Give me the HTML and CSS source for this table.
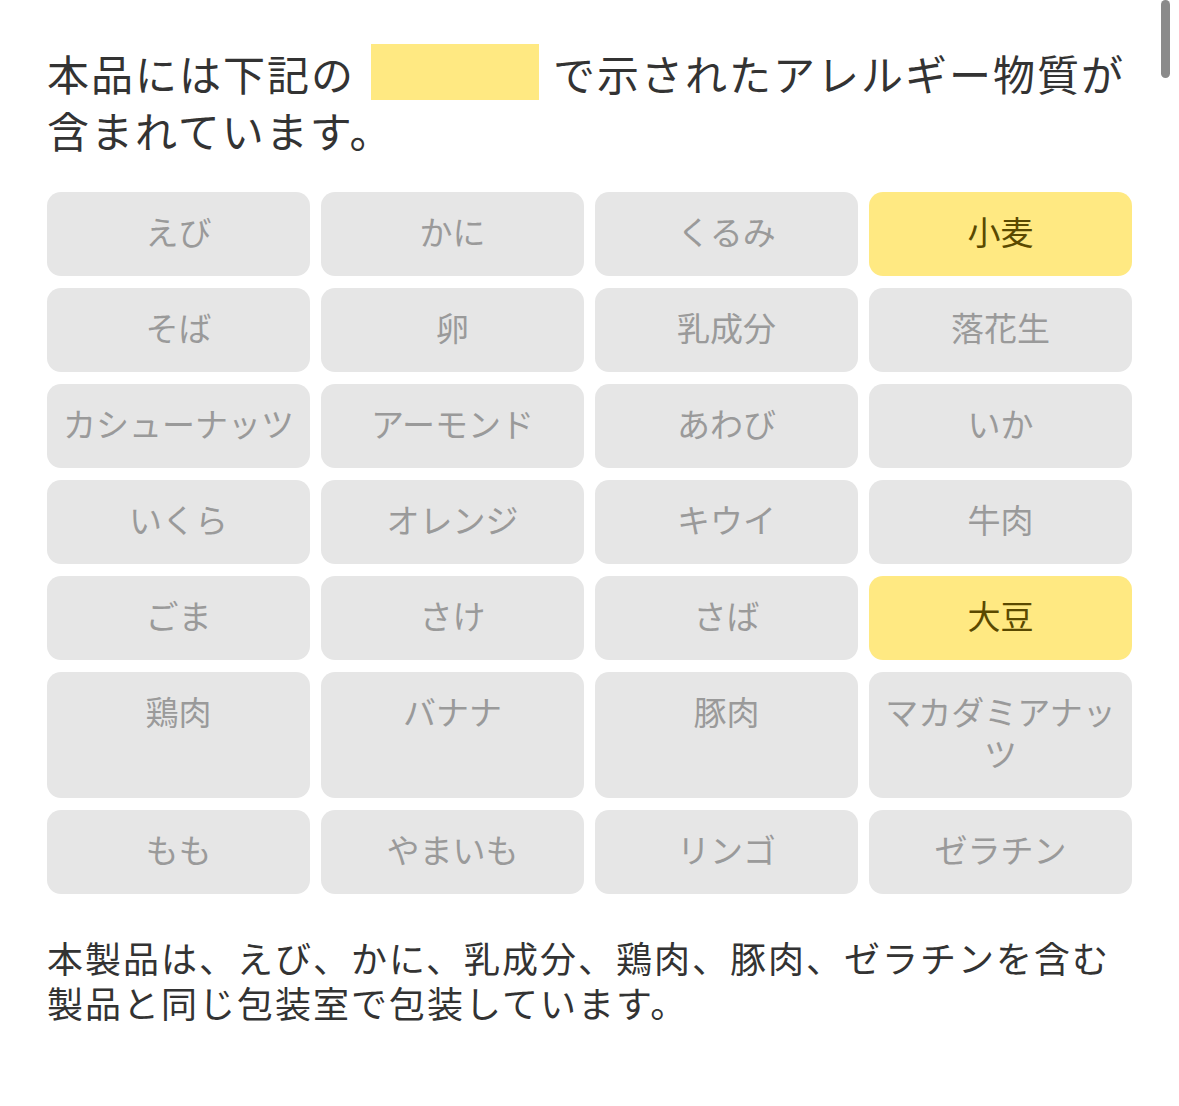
FILE: index.html
```html
<!DOCTYPE html>
<html lang="ja">
<head>
<meta charset="utf-8">
<link rel="stylesheet" href="styles.css">
</head>
<body>
<div class="page">
  <p class="lead">本品には下記の<span class="swatch"></span>で示されたアレルギー物質が含まれています。</p>
  <div class="grid">
    <div class="cell">えび</div>
    <div class="cell">かに</div>
    <div class="cell">くるみ</div>
    <div class="cell on">小麦</div>
    <div class="cell">そば</div>
    <div class="cell">卵</div>
    <div class="cell">乳成分</div>
    <div class="cell">落花生</div>
    <div class="cell">カシューナッツ</div>
    <div class="cell">アーモンド</div>
    <div class="cell">あわび</div>
    <div class="cell">いか</div>
    <div class="cell">いくら</div>
    <div class="cell">オレンジ</div>
    <div class="cell">キウイ</div>
    <div class="cell">牛肉</div>
    <div class="cell">ごま</div>
    <div class="cell">さけ</div>
    <div class="cell">さば</div>
    <div class="cell on">大豆</div>
    <div class="cell">鶏肉</div>
    <div class="cell">バナナ</div>
    <div class="cell">豚肉</div>
    <div class="cell">マカダミアナッツ</div>
    <div class="cell">もも</div>
    <div class="cell">やまいも</div>
    <div class="cell">リンゴ</div>
    <div class="cell">ゼラチン</div>
  </div>
  <p class="note">本製品は、えび、かに、乳成分、鶏肉、豚肉、ゼラチンを含む製品と同じ包装室で包装しています。</p>
</div>
<div class="scrollbar"></div>
</body>
</html>
```
FILE: styles.css
```css
html, body {
  margin: 0;
  padding: 0;
  background: #ffffff;
}
body {
  font-family: "Noto Sans CJK JP", "Noto Sans", sans-serif;
  color: #333333;
  width: 1179px;
  height: 1106px;
  overflow: hidden;
}
.page {
  padding: 44px 0 0 47px;
  width: 1085px;
}
.lead {
  margin: 0;
  width: 1115px;
  font-size: 42px;
  line-height: 57px;
  letter-spacing: 2px;
  color: #333333;
}
.swatch {
  display: inline-block;
  width: 168px;
  height: 56px;
  background: #ffe982;
  margin: 0 14px 0 16px;
  vertical-align: top;
}
.grid {
  margin-top: 34px;
  display: grid;
  grid-template-columns: repeat(4, 263px);
  column-gap: 11px;
  row-gap: 12px;
}
.cell {
  background: #e6e6e6;
  border-radius: 14px;
  padding: 18px 12px 24px;
  font-size: 33px;
  line-height: 42px;
  letter-spacing: 0;
  color: #9a9a9a;
  text-align: center;
}
.cell.on {
  background: #ffe982;
  color: #5a4900;
}
.note {
  margin: 41px 0 0 0;
  font-size: 36px;
  line-height: 45px;
  letter-spacing: 2px;
  color: #333333;
}
.scrollbar {
  position: absolute;
  top: 0;
  left: 1161px;
  width: 9px;
  height: 78px;
  border-radius: 5px;
  background: #8a8a8a;
}
```
